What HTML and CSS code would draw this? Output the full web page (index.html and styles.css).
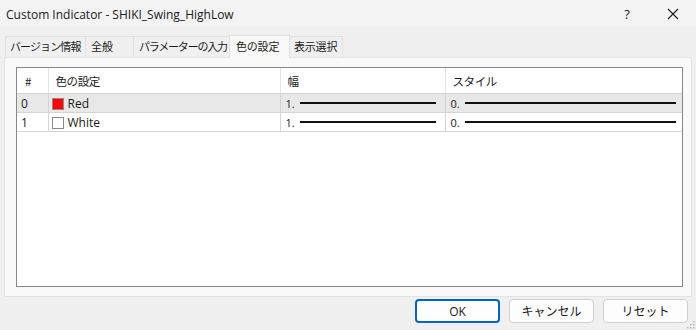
FILE: index.html
```html
<!DOCTYPE html>
<html lang="ja">
    <head>
        <meta charset="UTF-8">
        <title>Custom Indicator - SHIKI_Swing_HighLow</title>
        <link rel="stylesheet" href="styles.css">
    </head>
    <body>
        <div class="titlebar">
            <span class="title">Custom Indicator - SHIKI_Swing_HighLow</span>
            <span class="title-btn help">?</span>
            <span class="title-btn close">
                <svg width="12" height="12" viewBox="0 0 12 12"><path d="M1 1 L11 11 M11 1 L1 11" stroke="#1a1a1a" stroke-width="1.1" fill="none"/></svg>
            </span>
        </div>

        <div class="tabs">
            <div class="tab tab-1">バージョン情報</div>
            <div class="tab tab-2">全般</div>
            <div class="tab tab-3">パラメーターの入力</div>
            <div class="tab tab-active">色の設定</div>
            <div class="tab tab-5">表示選択</div>
        </div>

        <div class="panel">
            <div class="list">
                <table class="grid">
                    <colgroup>
                        <col class="c-num">
                        <col class="c-color">
                        <col class="c-width">
                        <col class="c-style">
                    </colgroup>
                    <thead>
                        <tr class="head-row">
                            <th>#</th>
                            <th>色の設定</th>
                            <th>幅</th>
                            <th>スタイル</th>
                        </tr>
                    </thead>
                    <tbody>
                        <tr class="row row-selected">
                            <td>0</td>
                            <td><span class="swatch swatch-red"></span>Red</td>
                            <td><div class="line-cell"><span>1.</span><i class="line line-w"></i></div></td>
                            <td><div class="line-cell"><span>0.</span><i class="line line-s"></i></div></td>
                        </tr>
                        <tr class="row">
                            <td>1</td>
                            <td><span class="swatch swatch-white"></span>White</td>
                            <td><div class="line-cell"><span>1.</span><i class="line line-w"></i></div></td>
                            <td><div class="line-cell"><span>0.</span><i class="line line-s"></i></div></td>
                        </tr>
                    </tbody>
                </table>
            </div>
        </div>

        <div class="footer">
            <button type="button" class="button button-ok">OK</button>
            <button type="button" class="button">キャンセル</button>
            <button type="button" class="button">リセット</button>
        </div>
        <div class="grip">
            <svg width="8" height="8" viewBox="0 0 8 8">
                <rect x="6" y="0" width="1.5" height="1.5" fill="#b4b4b4"/>
                <rect x="3" y="3" width="1.5" height="1.5" fill="#b4b4b4"/>
                <rect x="6" y="3" width="1.5" height="1.5" fill="#b4b4b4"/>
                <rect x="0" y="6" width="1.5" height="1.5" fill="#b4b4b4"/>
                <rect x="3" y="6" width="1.5" height="1.5" fill="#b4b4b4"/>
                <rect x="6" y="6" width="1.5" height="1.5" fill="#b4b4b4"/>
            </svg>
        </div>
    </body>
</html>
```

FILE: styles.css
```css
html, body {
    margin: 0;
    width: 696px;
    height: 330px;
    overflow: hidden;
}

body {
    background-color: #f0f0f0;
    font-family: "Open Sans", "Noto Sans CJK JP", sans-serif;
    font-size: 12px;
    color: #1a1a1a;
    position: relative;
}

/* barra de titulo */
.titlebar {
    height: 27px;
    background-color: #f3f3f3;
    display: flex;
    align-items: center;
}

.title {
    margin-left: 6px;
    font-size: 12px;
    flex: 1;
    margin-top: 1px;
}

.title-btn {
    display: flex;
    justify-content: center;
    align-items: center;
    width: 46px;
    height: 27px;
}

.help {
    font-size: 13px;
    margin-left: 4px;
}

/* abas */
.tabs {
    display: flex;
    align-items: flex-end;
    padding-left: 5px;
    margin-top: 8px;
    height: 22px;
}

.tab {
    box-sizing: border-box;
    height: 21px;
    line-height: 19px;
    border: 1px solid #e1e1e1;
    border-bottom: none;
    margin-right: -1px;
    background-color: #f0f0f0;
    font-family: "Noto Sans CJK JP", sans-serif;
    font-size: 11px;
    white-space: nowrap;
    overflow: hidden;
    padding-left: 5px;
}

.tab-1 { width: 81px; padding-left: 4px; letter-spacing: -0.9px; }
.tab-2 { width: 49px; }
.tab-3 { width: 97px; padding-left: 5px; letter-spacing: -1.2px; }
.tab-5 { width: 54px; padding-left: 4px; letter-spacing: -0.2px; }

.tab-active {
    width: 61px;
    height: 23px;
    line-height: 20px;
    background-color: #f9f9f9;
    padding-left: 6px;
    letter-spacing: -0.2px;
    position: relative;
    z-index: 1;
    margin-bottom: -1px;
}

.panel {
    box-sizing: border-box;
    margin-left: 4px;
    width: 688px;
    height: 240px;
    background-color: #f9f9f9;
    border: 1px solid #e3e3e3;
    padding: 9px 0 0 11px;
}

.list {
    box-sizing: border-box;
    width: 667px;
    height: 220px;
    background-color: #fff;
    border: 1px solid #858594;
}

.grid {
    border-collapse: collapse;
    table-layout: fixed;
    width: 665px;
}

.c-num { width: 31px; }
.c-color { width: 232px; }
.c-width { width: 165px; }
.c-style { width: 237px; }

.head-row th {
    height: 25px;
    padding: 0 0 0 7px;
    text-align: left;
    font-weight: normal;
    font-family: "Noto Sans CJK JP", sans-serif;
    font-size: 11.5px;
    letter-spacing: -0.4px;
    border-left: 1px solid #e5e5e5;
    border-bottom: 1px solid #d4d4d4;
}

.head-row th:first-child {
    border-left: none;
    padding-left: 8px;
}

.row td {
    height: 18px;
    padding: 0 0 0 3px;
    border-left: 1px solid #d4d4d4;
    border-bottom: 1px solid #d4d4d4;
    white-space: nowrap;
}

.row td:first-child {
    border-left: none;
    padding-left: 4px;
}

.row-selected td {
    background-color: #e8e8e8;
}

.swatch {
    display: inline-block;
    box-sizing: border-box;
    width: 12px;
    height: 12px;
    vertical-align: -2px;
    margin-right: 4px;
    border: 1px solid #8a8a8a;
}

.swatch-red {
    background-color: #ff0000;
}

.swatch-white {
    background-color: #fff;
}

.line-cell {
    display: flex;
    align-items: center;
    font-size: 11px;
    padding-left: 2px;
}

.line {
    display: block;
    height: 1.5px;
    background-color: #111;
    margin-left: 5px;
}

.line-w { width: 136px; }
.line-s { width: 211px; }

/* botoes */
.footer {
    display: flex;
    justify-content: flex-end;
    gap: 9px;
    padding-right: 8px;
    margin-top: 2px;
}

.button {
    box-sizing: border-box;
    width: 85px;
    height: 24px;
    background-color: #fdfdfd;
    border: 1px solid #d0d0d0;
    border-radius: 4px;
    font-family: "Open Sans", "Noto Sans CJK JP", sans-serif;
    font-size: 12px;
    color: #1a1a1a;
    padding: 0;
}

.button-ok {
    border: 2px solid #0067c0;
}

.grip {
    position: absolute;
    right: 1px;
    bottom: 1px;
    line-height: 0;
}
```
